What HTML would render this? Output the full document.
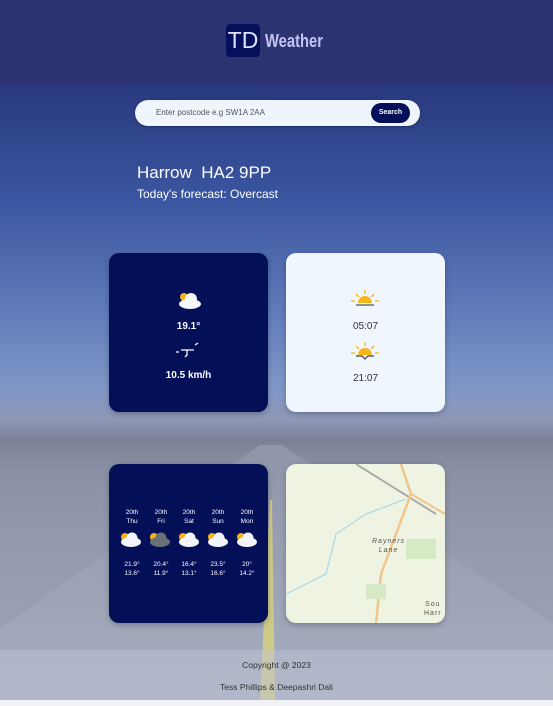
<!DOCTYPE html>
<html><head><meta charset="utf-8"><style>
*{margin:0;padding:0;box-sizing:border-box}
body{width:553px;height:706px;overflow:hidden;font-family:"Liberation Sans",sans-serif;position:relative;background:#f0f2f5}
.bg{position:absolute;left:0;top:0;width:553px;height:700px;background:linear-gradient(180deg,#25306e 0,#2a3a80 90px,#3a56a0 200px,#5d78b8 300px,#8097c8 390px,#8f98b6 420px,#7a8096 440px,#8b91a5 470px,#939aae 540px,#9aa1b4 640px,#a5acbf 700px)}
.road{position:absolute;left:0;top:445px;width:553px;height:255px;background:linear-gradient(180deg,#8f96aa,#a8aec0);clip-path:polygon(47% 0,51% 0,100% 70%,100% 100%,0 100%,0 72%)}
.line{position:absolute;left:240px;top:500px;width:50px;height:200px;background:#cfc98a;clip-path:polygon(60% 0,64% 0,70% 100%,40% 100%)}
.header{position:absolute;left:0;top:0;width:553px;height:83px;background:#2b3371}
.logo{position:absolute;left:226px;top:24px;width:34px;height:33px;background:#06105a;border-radius:4px;color:#dfe3ff;font-size:23px;line-height:33px;text-align:center}
.wt{position:absolute;left:265px;top:31px;color:#c6c3f5;font-weight:bold;font-size:18px;transform:scaleX(.82);transform-origin:left}
.search{position:absolute;left:135px;top:100px;width:285px;height:26px;background:#eef5fd;border-radius:13px;box-shadow:0 1px 3px rgba(0,0,0,.3)}
.search span{position:absolute;left:21px;top:8px;font-size:8px;color:#555}
.btn{position:absolute;left:371px;top:103px;width:39px;height:20px;background:#06105a;border-radius:10px;color:#fff;font-size:7px;font-weight:bold;text-align:center;line-height:20px}
.city{position:absolute;left:137px;top:163px;color:#fff;font-size:17px}
.fc{position:absolute;left:137px;top:187px;color:#fff;font-size:12px}
.card{position:absolute;border-radius:10px;text-align:center;box-shadow:0 2px 6px rgba(0,0,0,.25)}
.d{background:#030f57;color:#fff}
.l{background:#eff6fd;color:#333}
.footer{position:absolute;left:0;top:650px;width:553px;height:50px;background:rgba(190,198,214,.45);text-align:center;color:#333;font-size:8.5px}
.fd{position:absolute;top:508px;width:30px;text-align:center;color:#fff;font-size:6.5px;line-height:9px}
</style></head><body>
<div class="bg"></div><div class="road"></div><div class="line"></div>
<div class="header"><div class="logo">TD</div><div class="wt">Weather</div></div>
<div class="search"><span>Enter postcode e.g SW1A 2AA</span></div><div class="btn">Search</div>
<div class="city">Harrow&nbsp; HA2 9PP</div>
<div class="fc">Today's forecast: Overcast</div>

<div class="card d" style="left:109px;top:253px;width:159px;height:159px">
<svg style="position:absolute;left:66px;top:36px" width="28" height="22"><circle cx="9" cy="8" r="4" fill="#f5b31a"/><ellipse cx="15" cy="15" rx="11" ry="5" fill="#f4f6fb"/><circle cx="16" cy="10" r="6" fill="#f4f6fb"/></svg>
<div style="position:absolute;top:68px;width:100%;font-size:10px;font-weight:bold">19.1°</div>
<svg style="position:absolute;left:64px;top:88px" width="30" height="20" stroke="#fff" stroke-width="1.3" fill="none"><path d="M3 11h3M8 9h13M14 9v5l-2 2M22 4l3-2"/></svg>
<div style="position:absolute;top:117px;width:100%;font-size:10px;font-weight:bold">10.5 km/h</div>
</div>

<div class="card l" style="left:286px;top:253px;width:159px;height:159px">
<svg style="position:absolute;left:64px;top:36px" width="30" height="18"><path d="M8 14a7 7 0 0 1 14 0z" fill="#f7b51a"/><path d="M15 1v4M6 5l3 3M24 5l-3 3M1 12h4M25 12h4" stroke="#f7b51a" stroke-width="1.3"/><path d="M6 16h18" stroke="#555" stroke-width="1.2"/></svg>
<div style="position:absolute;top:68px;width:100%;font-size:10px">05:07</div>
<svg style="position:absolute;left:64px;top:88px" width="30" height="20"><path d="M8 14a7 7 0 0 1 14 0z" fill="#f7b51a"/><path d="M15 1v4M6 5l3 3M24 5l-3 3M1 12h4M25 12h4" stroke="#f7b51a" stroke-width="1.3"/><path d="M6 15h6l3 3 3-3h6" stroke="#444" stroke-width="1.2" fill="none"/></svg>
<div style="position:absolute;top:120px;width:100%;font-size:10px">21:07</div>
</div>

<div class="card d" style="left:109px;top:464px;width:159px;height:159px"></div>
<div class="fd" style="left:117px">20th<br>Thu</div>
<div class="fd" style="left:146px">20th<br>Fri</div>
<div class="fd" style="left:174px">20th<br>Sat</div>
<div class="fd" style="left:203px">20th<br>Sun</div>
<div class="fd" style="left:232px">20th<br>Mon</div>
<svg style="position:absolute;left:117px;top:530px" width="150" height="20">
<g id="c"><circle cx="8" cy="7" r="4" fill="#f5b31a"/><ellipse cx="14" cy="12" rx="10" ry="5" fill="#f2f4fa"/><circle cx="15" cy="8" r="5.5" fill="#f2f4fa"/></g>
<use href="#c" x="58"/><use href="#c" x="87"/><use href="#c" x="116"/>
<g transform="translate(29 0)"><circle cx="8" cy="7" r="4" fill="#f5b31a"/><ellipse cx="14" cy="12" rx="10" ry="5" fill="#6b6f78"/><circle cx="15" cy="8" r="5.5" fill="#6b6f78"/></g>
</svg>
<div class="fd" style="left:117px;top:560px">21.9°<br>13.6°</div>
<div class="fd" style="left:146px;top:560px">20.4°<br>11.9°</div>
<div class="fd" style="left:174px;top:560px">16.4°<br>13.1°</div>
<div class="fd" style="left:203px;top:560px">23.5°<br>16.6°</div>
<div class="fd" style="left:232px;top:560px">20°<br>14.2°</div>

<div class="card" style="left:286px;top:464px;width:159px;height:159px;background:#eef3e2;overflow:hidden">
<svg width="159" height="159" style="position:absolute;left:0;top:0" fill="none">
<path d="M70 0l80 50" stroke="#aaa" stroke-width="2"/>
<path d="M115 0l10 30-30 80-5 50" stroke="#f0c68a" stroke-width="2.5"/>
<path d="M125 30l34 20" stroke="#f0c68a" stroke-width="2"/>
<path d="M0 130l40-20 10-40 30-20 40-15" stroke="#9fd3e8" stroke-width="1"/>
<rect x="80" y="120" width="20" height="15" fill="#d6e8c4"/><rect x="120" y="75" width="30" height="20" fill="#d6e8c4"/>
</svg>
<div style="position:absolute;left:86px;top:73px;font-size:7px;color:#555;letter-spacing:1px;font-style:italic;line-height:9px;text-align:center">Rayners<br>Lane</div>
<div style="position:absolute;left:138px;top:136px;font-size:7px;color:#555;letter-spacing:1px;line-height:9px">Sou<br>Harr</div>
</div>

<div class="footer"><div style="margin-top:10px">Copyright @ 2023</div><div style="margin-top:12px">Tess Phillips &amp; Deepashri Dali</div></div>
</body></html>
